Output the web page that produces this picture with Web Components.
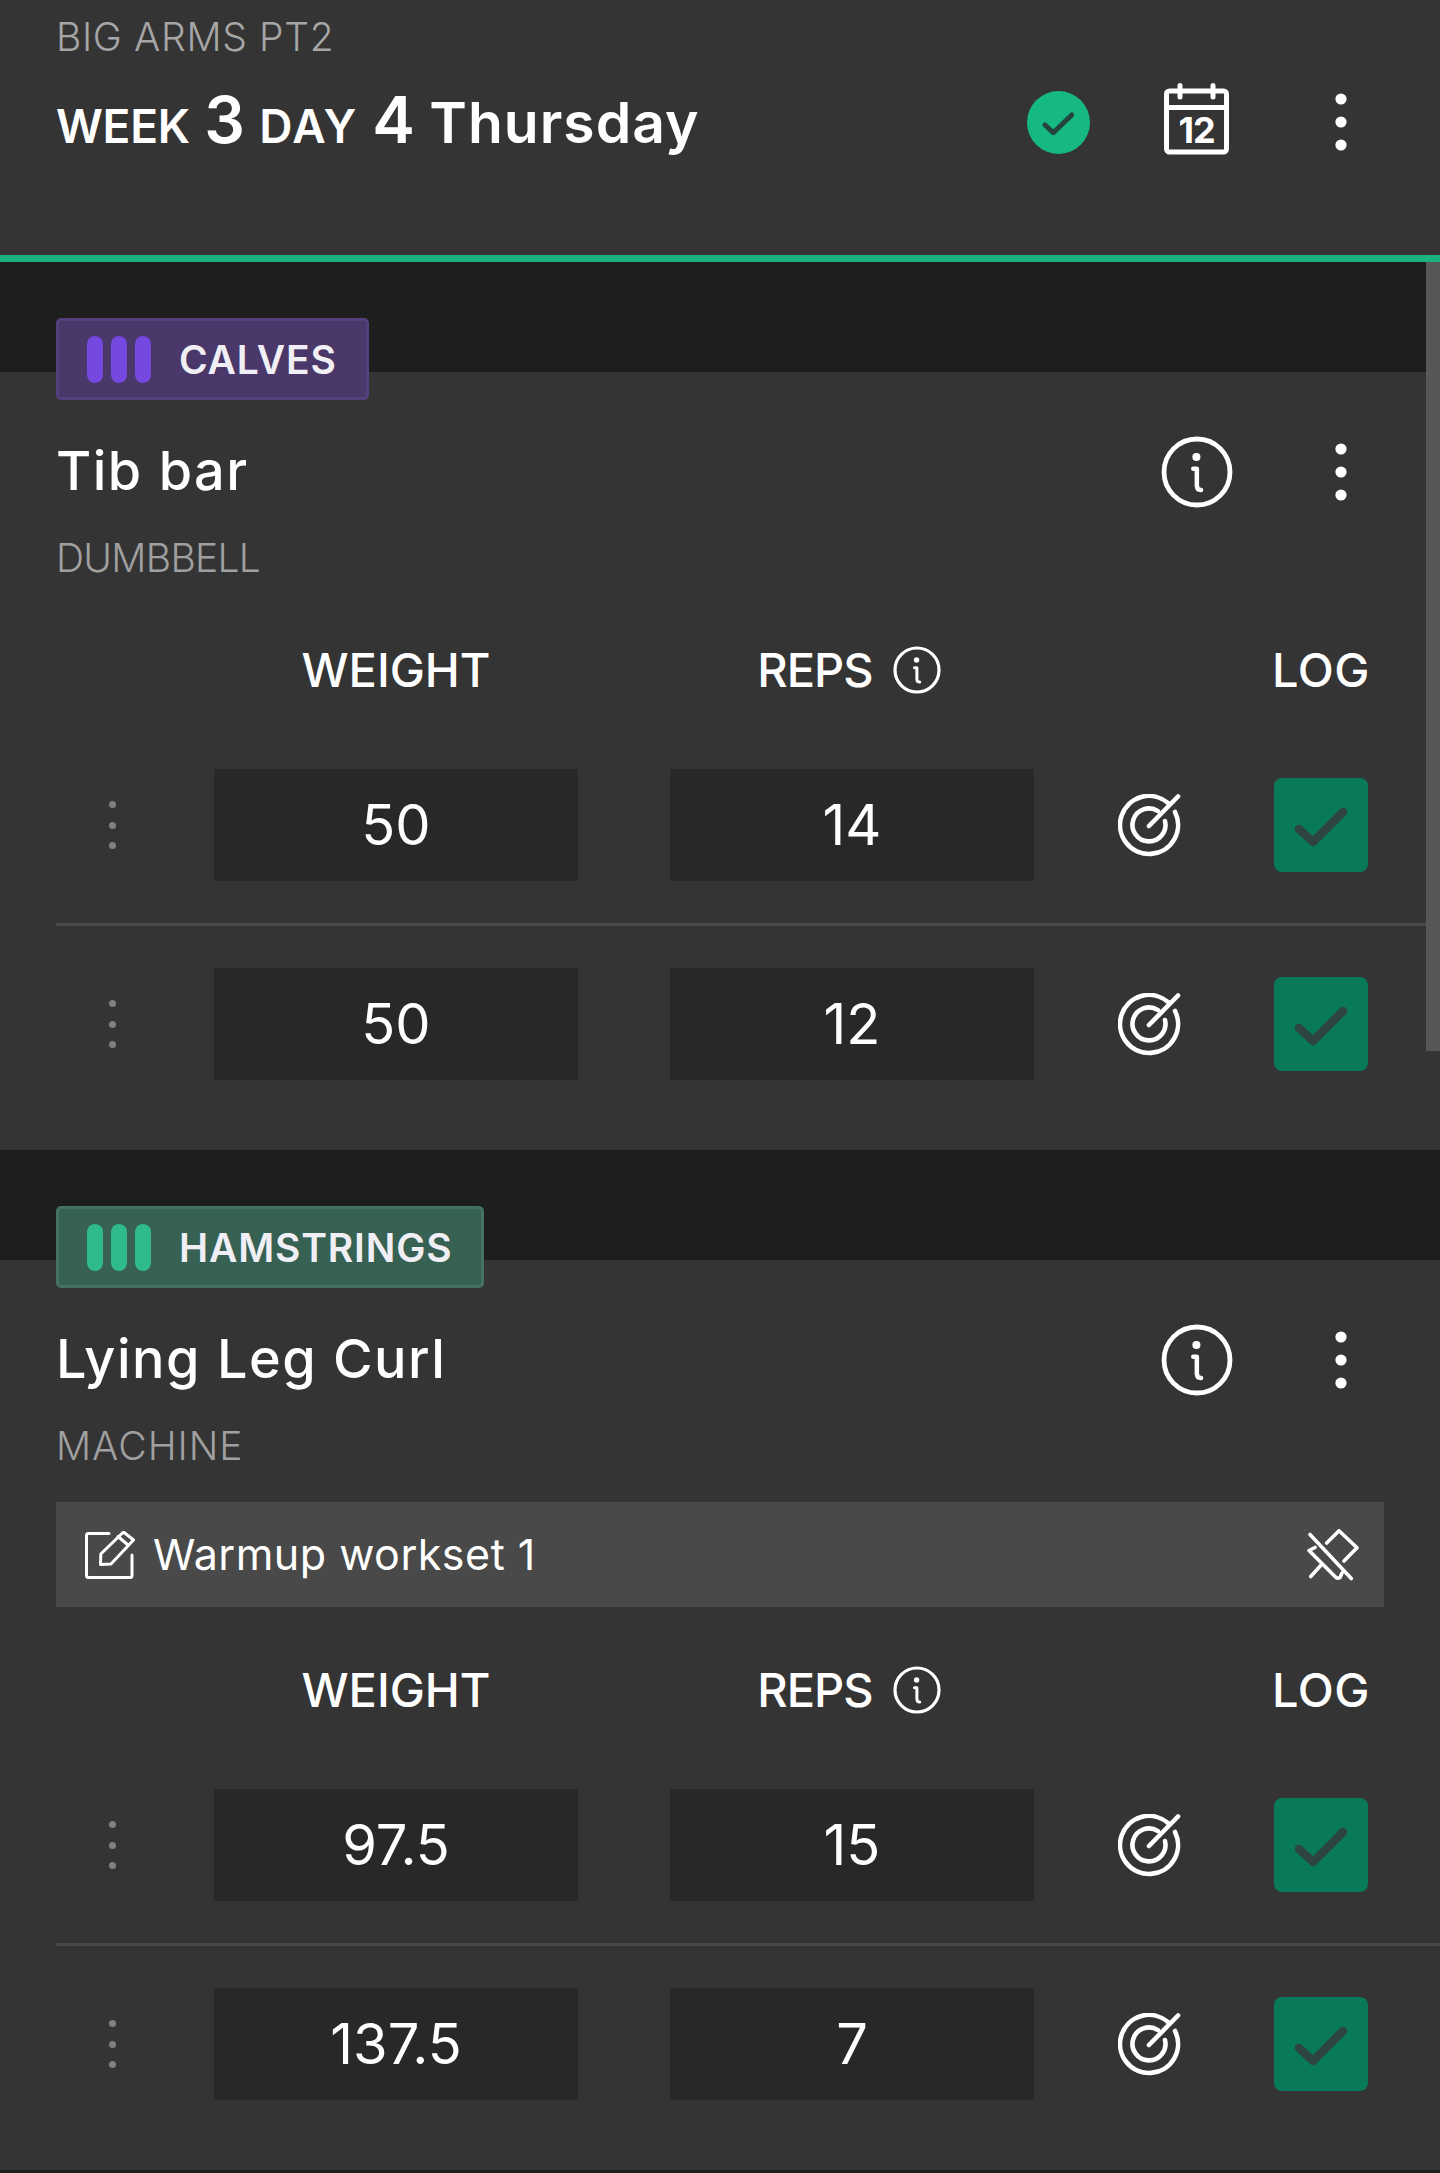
<!DOCTYPE html>
<html>
<head>
<meta charset="utf-8">
<style>
html, body { margin: 0; padding: 0; background: #1e1e1e; }
body { font-family: "Inter", "Liberation Sans", sans-serif; color: #fff; height: 2173px; overflow: hidden; }
</style>
</head>
<body>
<workout-page>
    <workout-header slot="header" plan="BIG ARMS PT2"></workout-header>
    <exercise-card muscle="CALVES" color="purple" name="Tib bar" kind="DUMBBELL">
        <set-row weight="50" reps="14"></set-row>
        <set-row weight="50" reps="12" last></set-row>
    </exercise-card>
    <exercise-card muscle="HAMSTRINGS" color="green" name="Lying Leg Curl" kind="MACHINE" note="Warmup workset 1">
        <set-row weight="97.5" reps="15"></set-row>
        <set-row weight="137.5" reps="7" last></set-row>
    </exercise-card>
</workout-page>

<script>
const icons = {
    dots: `<svg width="12" height="58" viewBox="0 0 12 58"><circle cx="6" cy="6" r="5.6" fill="#fff"/><circle cx="6" cy="29" r="5.6" fill="#fff"/><circle cx="6" cy="52" r="5.6" fill="#fff"/></svg>`,
    info: (size) => `<svg width="${size}" height="${size}" viewBox="0 0 48 48" fill="none" stroke="#fff" stroke-linecap="round" stroke-linejoin="round"><circle cx="24" cy="24" r="22" stroke-width="3.2"/><circle cx="23.6" cy="14" r="2.7" fill="#fff" stroke="none"/><path d="M21.5 21.8h2.4v11.2q0 3 2.8 3" stroke-width="3"/></svg>`,
    target: `<svg width="63" height="63" viewBox="0 0 63 63" fill="none" stroke="#fff" stroke-width="4.6" stroke-linecap="round"><path d="M50 9A29 29 0 1 0 57 18"/><path d="M40 17.1A16.5 16.5 0 1 0 47 27"/><path d="M31 32L60 2.5"/></svg>`,
    check: `<svg width="94" height="94" viewBox="0 0 94 94" fill="none" stroke="#2e4440" stroke-width="8.5" stroke-linecap="round" stroke-linejoin="round"><path d="M25 51L39 64L69 34"/></svg>`,
    edit: `<svg width="50" height="48" viewBox="0 0 50 48" fill="none" stroke="#fff" stroke-width="3" stroke-linecap="round" stroke-linejoin="round"><path d="M24 2.5H3.5Q1.5 2.5 1.5 4.5V44.5Q1.5 46.5 3.5 46.5H45Q47 46.5 47 44.5V24"/><path d="M38.5 1L48.5 9L26 33L15.5 33.5L15.8 23Z"/><path d="M33 5.5L43 14"/></svg>`,
    pinOff: `<svg width="52" height="52" viewBox="0 0 52 52" fill="none" stroke="#fff" stroke-width="3.6" stroke-linecap="round" stroke-linejoin="round"><path d="M3 5.5L44.3 49.5"/><path d="M19.7 14L32 1.8L50 18.7L37 32"/><path d="M8 18.5L2 21.5L29 48.5Q31 50 33 48.5L35 44"/><path d="M13.7 36.5L3.7 47.5"/></svg>`
};

class WorkoutPage extends HTMLElement {
    constructor() {
        super();
        this.attachShadow({ mode: 'open' });
        this.shadowRoot.innerHTML = `
        <style>
        :host { display: block; position: relative; }
        .scrollbar {
            position: absolute;
            top: 262px;
            right: 0;
            width: 14px;
            height: 789px;
            background: #575757;
        }
        </style>
        <slot name="header"></slot>
        <slot></slot>
        <div class="scrollbar"></div>
        `;
    }
}

class WorkoutHeader extends HTMLElement {
    constructor() {
        super();
        this.attachShadow({ mode: 'open' });
        this.shadowRoot.innerHTML = `
        <style>
        :host {
            display: flex;
            justify-content: space-between;
            box-sizing: border-box;
            height: 262px;
            padding: 14px 93px 0 56px;
            background: #343434;
            border-bottom: 7px solid #1bb282;
        }
        .plan { font-size: 39px; font-weight: 300; line-height: 46px; color: #a6a6a6; letter-spacing: 0.65px; }
        .title { margin-top: 25px; height: 70px; line-height: 70px; font-weight: 600; font-size: 57px; color: #fff; white-space: nowrap; }
        .small { font-size: 46px; letter-spacing: -0.3px; }
        .small.wide { letter-spacing: 1.5px; }
        .num { font-size: 64px; font-weight: 600; }
        .day { letter-spacing: 1px; }
        .actions { display: flex; align-items: center; height: 72px; margin-top: 72px; }
        .actions svg { display: block; }
        .done { margin-right: 74px; }
        .cal { margin: -6px 106px 0 0; }
        .cal text { font-family: "Inter", sans-serif; font-weight: 700; font-size: 36px; fill: #fff; stroke: none; letter-spacing: -1px; }
        </style>
        <div>
            <div class="plan">${this.getAttribute('plan')}</div>
            <div class="title"><span class="small">WEEK</span> <span class="num">3</span> <span class="small wide">DAY</span> <span class="num">4</span> <span class="day">Thursday</span></div>
        </div>
        <div class="actions">
            <svg class="done" width="63" height="63" viewBox="0 0 63 63"><circle cx="31.5" cy="31.5" r="31.5" fill="#16b981"/><path d="M18 34L26.3 41.7L44.7 24" fill="none" stroke="#24453f" stroke-width="5" stroke-linecap="round" stroke-linejoin="round"/></svg>
            <svg class="cal" width="65" height="72" viewBox="0 0 65 72" fill="none" stroke="#fff" stroke-width="5" stroke-linecap="round"><rect x="2.5" y="8" width="60" height="61" rx="3"/><path d="M2.5 24.5H62.5M16 2.5V14M49 2.5V14"/><text x="32.5" y="60" text-anchor="middle">12</text></svg>
            ${icons.dots}
        </div>
        `;
    }
}

class MuscleBadge extends HTMLElement {
    constructor() {
        super();
        this.attachShadow({ mode: 'open' });
        this.shadowRoot.innerHTML = `
        <style>
        :host {
            display: inline-flex;
            align-items: center;
            box-sizing: border-box;
            height: 82px;
            padding: 0 29px 0 28px;
            border: 3px solid var(--edge);
            border-radius: 5px;
            background: var(--fill);
            --edge: #54407f;
            --fill: #493869;
            --bar: #7549e0;
        }
        :host([color="green"]) { --edge: #437260; --fill: #376152; --bar: #2fbb8e; }
        .bars { display: flex; gap: 8px; margin-right: 28px; }
        .bars i { display: block; width: 16px; height: 47px; border-radius: 8px; background: var(--bar); }
        span { font-size: 39px; font-weight: 600; color: #f1eff6; white-space: nowrap; letter-spacing: 0.85px; }
        </style>
        <div class="bars"><i></i><i></i><i></i></div>
        <span><slot></slot></span>
        `;
    }
}

class ExerciseCard extends HTMLElement {
    constructor() {
        super();
        this.attachShadow({ mode: 'open' });
        const note = this.getAttribute('note');
        this.shadowRoot.innerHTML = `
        <style>
        :host {
            display: block;
            margin-top: 110px;
            padding-bottom: 70px;
            background: #343434;
        }
        muscle-badge { margin: -54px 0 0 56px; vertical-align: top; }
        .top { display: flex; align-items: center; height: 72px; margin-top: 36px; padding: 0 93px 0 56px; }
        .name { flex: 1; padding-bottom: 4px; font-size: 54px; font-weight: 500; color: #fff; letter-spacing: 1.5px; }
        .top svg { display: block; }
        .info { margin-right: 102px; }
        .kind { margin: 28px 0 0 56px; padding-bottom: 7px; font-size: 39px; font-weight: 300; line-height: 44px; color: #a0a0a0; }
        :host([kind="DUMBBELL"]) .kind { letter-spacing: -0.7px; }
        :host([kind="MACHINE"]) .kind { letter-spacing: 1px; }
        .note {
            display: flex;
            align-items: center;
            height: 105px;
            margin: 27px 56px 0;
            padding: 0 25px 0 29px;
            background: #494949;
            font-size: 43px;
            font-weight: 400;
            letter-spacing: 0.5px;
        }
        .note span { flex: 1; margin-left: 18px; padding-bottom: 2px; }
        .head {
            display: grid;
            grid-template-columns: 158px 364px 92px 364px 240px 94px;
            align-items: center;
            height: 48px;
            line-height: 48px;
            margin: 59px 0 75px 56px;
            font-size: 47px;
            font-weight: 500;
            text-align: center;
        }
        .log { letter-spacing: 0.5px; margin-left: -2px; }
        .reps { display: flex; align-items: center; justify-content: center; gap: 20px; margin-left: -6px; }
        .reps span { letter-spacing: -1px; }
        .reps svg { display: block; }
        </style>
        <muscle-badge color="${this.getAttribute('color')}">${this.getAttribute('muscle')}</muscle-badge>
        <div class="top">
            <div class="name">${this.getAttribute('name')}</div>
            <div class="info">${icons.info(72)}</div>
            ${icons.dots}
        </div>
        <div class="kind">${this.getAttribute('kind')}</div>
        ${note ? `<div class="note">${icons.edit}<span>${note}</span>${icons.pinOff}</div>` : ''}
        <div class="head">
            <div></div>
            <div>WEIGHT</div>
            <div></div>
            <div class="reps"><span>REPS</span> ${icons.info(48)}</div>
            <div></div>
            <div class="log">LOG</div>
        </div>
        <slot></slot>
        `;
    }
}

class SetRow extends HTMLElement {
    constructor() {
        super();
        this.attachShadow({ mode: 'open' });
        this.shadowRoot.innerHTML = `
        <style>
        :host {
            display: grid;
            grid-template-columns: 158px 364px 92px 364px 84px 63px 93px 94px;
            align-items: center;
            height: 112px;
            margin-left: 56px;
            padding-bottom: 42px;
            margin-bottom: 42px;
            border-bottom: 3px solid #484848;
        }
        :host([last]) { padding-bottom: 0; margin-bottom: 0; border-bottom: 0; }
        .grip { display: flex; flex-direction: column; gap: 13.5px; margin-left: 52.5px; }
        .grip i { display: block; width: 7px; height: 7px; border-radius: 50%; background: #808080; }
        .val {
            height: 112px;
            line-height: 112px;
            text-align: center;
            background: #282828;
            font-size: 56px;
            font-weight: 375;
        }
        .second { grid-column: 4; }
        .target { grid-column: 6; }
        svg { display: block; }
        .log { grid-column: 8; width: 94px; height: 94px; border-radius: 8px; background: #087a59; }
        </style>
        <div class="grip"><i></i><i></i><i></i></div>
        <div class="val">${this.getAttribute('weight')}</div>
        <div class="val second">${this.getAttribute('reps')}</div>
        <div class="target">${icons.target}</div>
        <div class="log">${icons.check}</div>
        `;
    }
}

customElements.define('muscle-badge', MuscleBadge);
customElements.define('set-row', SetRow);
customElements.define('exercise-card', ExerciseCard);
customElements.define('workout-header', WorkoutHeader);
customElements.define('workout-page', WorkoutPage);
</script>
</body>
</html>
